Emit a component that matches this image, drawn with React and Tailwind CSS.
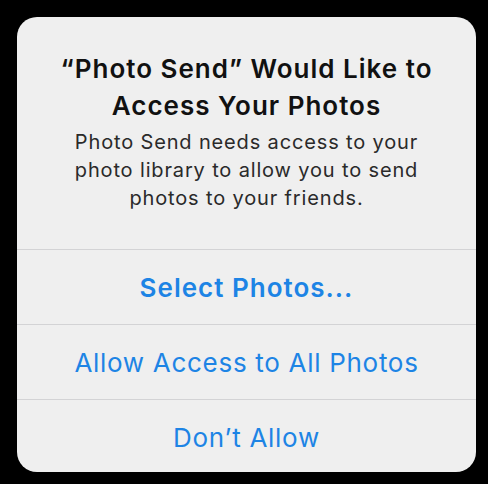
import React from 'react';

const actions = [
  { label: 'Select Photos...', bold: true },
  { label: 'Allow Access to All Photos' },
  { label: 'Don\u2019t Allow' },
];

export default function App() {
  return (
    <div className="w-[488px] h-[484px] bg-black pt-[17px] pl-[17px] font-['Inter',sans-serif]">
      <div className="w-[459px] h-[455px] bg-[#efefef] rounded-[20px] overflow-hidden flex flex-col">
        <div className="h-[232px] pt-[33px] px-1 text-center shrink-0">
          <h1 className="text-[26px] leading-[37px] font-semibold tracking-[1px] text-[#111111]">
            <span className="block">{'\u201CPhoto Send\u201D Would Like to'}</span>
            <span className="block">Access Your Photos</span>
          </h1>
          <p className="mt-[4px] text-[20px] leading-[28px] tracking-[0.85px] text-[#2a2a2a]">
            <span className="block">Photo Send needs access to your</span>
            <span className="block">photo library to allow you to send</span>
            <span className="block">photos to your friends.</span>
          </p>
        </div>
        {actions.map((a, i) => (
          <button
            key={i}
            className={`shrink-0 h-[75px] border-t border-[#d3d3d5] flex items-center justify-center text-[26px] text-[#1d84e5] ${a.bold ? 'font-semibold tracking-[1px]' : 'font-normal tracking-[0.7px]'}`}
          >
            {a.label}
          </button>
        ))}
      </div>
    </div>
  );
}
